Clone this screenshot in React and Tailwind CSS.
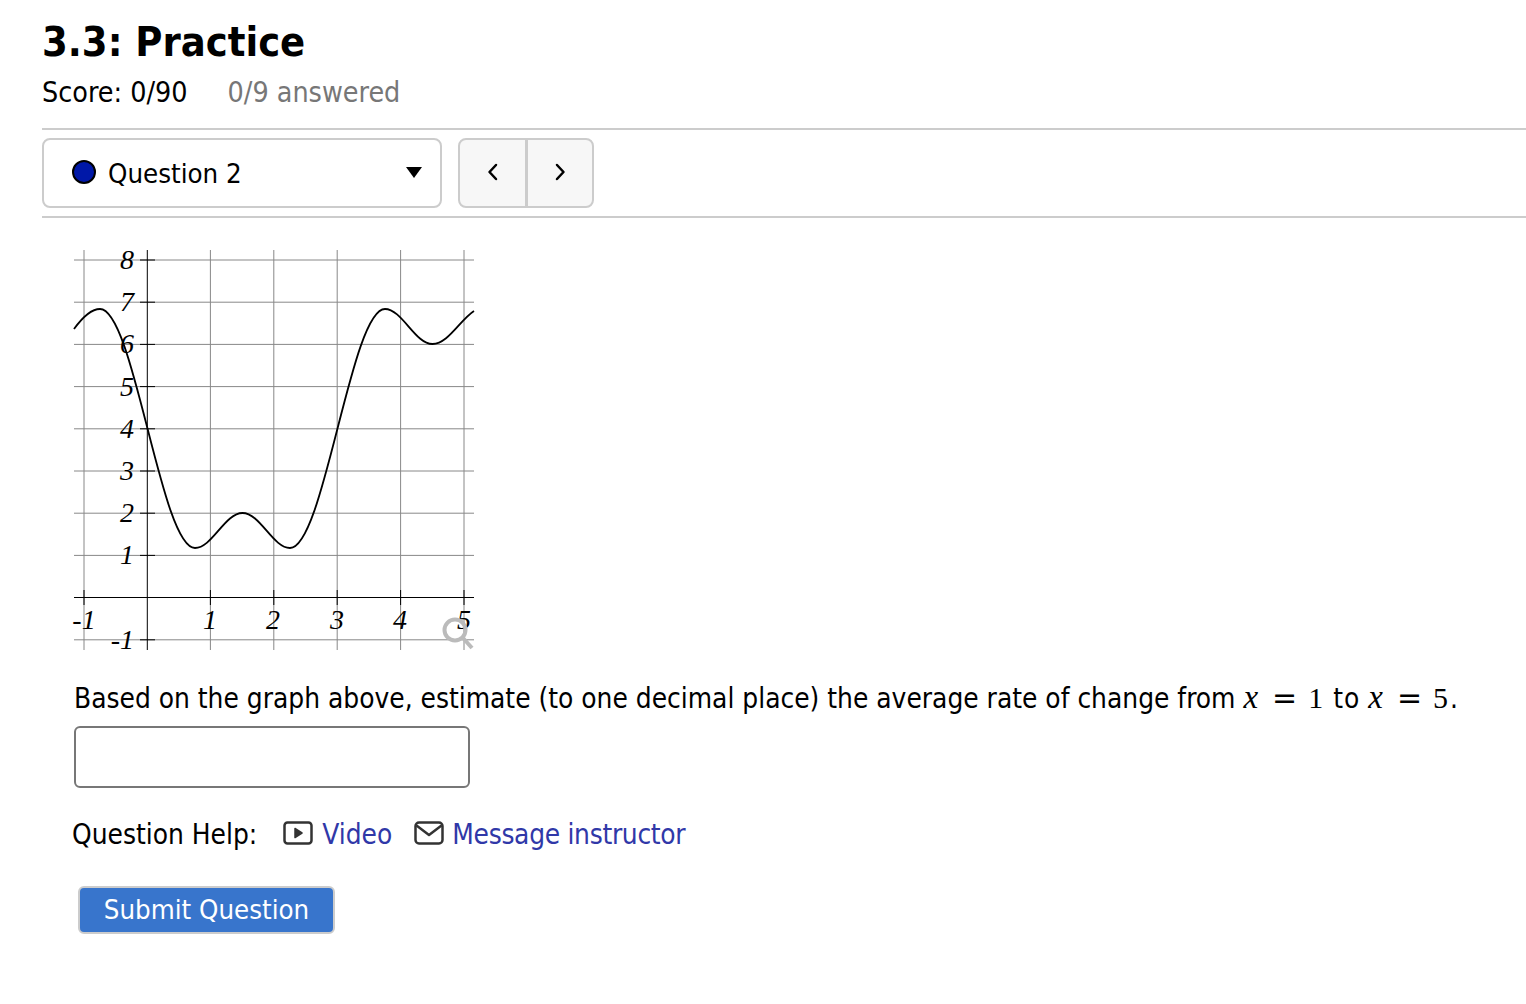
const xTicks = [
  { x: 84, label: '-1', lx: 84 },
  { x: 210.4, label: '1', lx: 210 },
  { x: 273.8, label: '2', lx: 273 },
  { x: 337.2, label: '3', lx: 337 },
  { x: 400.6, label: '4', lx: 400 },
  { x: 464, label: '5', lx: 464 },
];

const yTicks = [
  { y: 260, label: '8' },
  { y: 302.2, label: '7' },
  { y: 344.4, label: '6' },
  { y: 386.6, label: '5' },
  { y: 428.8, label: '4' },
  { y: 471, label: '3' },
  { y: 513.2, label: '2' },
  { y: 555.4, label: '1' },
  { y: 639.8, label: '-1' },
];

const curve =
  'M0 79 C8 68 17 59 26 59 C60 59 87 298 121 298 C138 298 151 263 168.500 263 C186 263 199 298 216 298 C250 298 277 59 311 59 C328 59 341 94 358.500 94 C374 94 386 70 400 61';

const Graph = () => (
  <svg width="400" height="400" viewBox="0 0 400 400" className="block overflow-visible">
    {xTicks.map((t) => (
      <line key={t.x} x1={t.x - 74} x2={t.x - 74} y1="0" y2="400" stroke="#888" strokeWidth="1" />
    ))}
    {yTicks.map((t) => (
      <line key={t.y} x1="0" x2="400" y1={t.y - 250} y2={t.y - 250} stroke="#888" strokeWidth="1" />
    ))}
    <line x1="73.300" x2="73.300" y1="0" y2="400" stroke="#000" />
    <line x1="0" x2="400" y1="347.500" y2="347.500" stroke="#000" />
    {yTicks.map((t) => (
      <line key={t.y} x1="66" x2="81" y1={t.y - 250} y2={t.y - 250} stroke="#000" />
    ))}
    <line x1="66" x2="81" y1="347.500" y2="347.500" stroke="#000" />
    {xTicks.map((t) => (
      <line key={t.x} x1={t.x - 74} x2={t.x - 74} y1="340" y2="355" stroke="#000" />
    ))}
    <g fontFamily="'Liberation Serif', serif" fontStyle="italic" fontSize="28" fill="#000">
      {yTicks.map((t) => (
        <text key={t.y} x="60" y={t.y - 250 + 9} textAnchor="end">
          {t.label}
        </text>
      ))}
      {xTicks.map((t) => (
        <text key={t.x} x={t.lx - 74} y="379" textAnchor="middle">
          {t.label}
        </text>
      ))}
    </g>
    <path d={curve} fill="none" stroke="#000" strokeWidth="1.800" />
    <circle cx="381" cy="380" r="10.500" fill="none" stroke="#bbb" strokeWidth="4" />
    <line x1="389" x2="398" y1="388" y2="398" stroke="#bbb" strokeWidth="4" />
  </svg>
);

const Chevron = ({ d }) => (
  <svg className="mb-[2px]" width="16" height="20" viewBox="0 0 16 20" fill="none" stroke="#000" strokeWidth="2.500" strokeLinecap="round" strokeLinejoin="round">
    <path d={d} />
  </svg>
);

const Equation = ({ value }) => (
  <span className="font-['Liberation_Serif',serif] text-[30px]">
    <i className="text-[33px]">x</i>
    <span className="mr-[11px] ml-[14px] font-['DejaVu_Sans',sans-serif] text-[30px]">=</span>
    {value}
  </span>
);

export default function App() {
  return (
    <div className="min-h-screen bg-white pl-[42px] font-['DejaVu_Sans_Condensed','DejaVu_Sans',sans-serif] text-black">
      <h1 className="pt-[16px] text-[41.200px] leading-[52px] font-bold">3.3: Practice</h1>
      <div className="mt-[4px] flex h-[42px] items-center text-[28.400px]">
        <span>Score: 0/90</span>
        <span className="ml-[40px] text-[#777]">0/9 answered</span>
      </div>
      <hr className="mt-[14px] border-0 border-t-2 border-[#ccc]" />
      <div className="mt-[8px] flex gap-4">
        <div className="flex h-[70px] w-[400px] items-center rounded-lg border-2 border-[#ccc] pr-[18px] pl-[28px]">
          <span className="mb-[2px] h-6 w-6 rounded-full border-2 border-black bg-[#0018a8]" />
          <span className="mt-[2px] ml-[12px] text-[27.400px]">Question 2</span>
          <span className="mb-[2px] ml-auto h-0 w-0 border-x-[8px] border-t-[11px] border-x-transparent border-t-black" />
        </div>
        <div className="flex h-[70px] w-[136px] rounded-lg border-2 border-[#ccc] bg-[#f7f7f7]">
          <button className="flex w-[68px] items-center justify-center border-r-[3px] border-[#ccc]">
            <Chevron d="M11 3 L4.500 10 L11 17" />
          </button>
          <button className="flex flex-1 items-center justify-center">
            <Chevron d="M5 3 L11.500 10 L5 17" />
          </button>
        </div>
      </div>
      <hr className="mt-[8px] border-0 border-t-2 border-[#ccc]" />

      <div className="pl-[32px]">
        <div className="mt-[32px]">
          <Graph />
        </div>
        <p className="mt-[27px] h-[40px] text-[27.800px] leading-[40px] whitespace-nowrap">
          Based on the graph above, estimate (to one decimal place) the average rate of change from <Equation value="1" /> <span className="ml-[2px] tracking-[1px]">to</span> <Equation value="5" /><span className="ml-[2px]">.</span>
        </p>
        <input className="mt-[9px] block h-[62px] w-[396px] rounded-md border-2 border-[#777] bg-white" />
        <div className="mt-[26px] -ml-[2px] flex h-[42px] items-center text-[27.800px]">
          <span>Question Help:</span>
          <svg className="mb-[4px] ml-[26px]" width="30" height="24" viewBox="0 0 30 24" fill="none">
            <rect x="1.500" y="1.500" width="27" height="21" rx="3" stroke="#333" strokeWidth="2.500" />
            <path d="M12 7.500 L19 12 L12 16.500 Z" fill="#333" stroke="#333" strokeWidth="1.500" strokeLinejoin="round" />
          </svg>
          <a className="ml-[9px] text-[#3038a8]">Video</a>
          <svg className="mb-[4px] ml-[22px]" width="30" height="24" viewBox="0 0 30 24" fill="none">
            <rect x="1.500" y="1.500" width="27" height="21" rx="3.500" stroke="#333" strokeWidth="2.500" />
            <path d="M2.500 4.500 L15 14 L27.500 4.500" stroke="#333" strokeWidth="2.500" strokeLinejoin="round" />
          </svg>
          <a className="ml-[8px] tracking-[-0.3px] text-[#3038a8]">Message instructor</a>
        </div>
        <button className="mt-[30px] ml-[4px] block h-[48px] w-[257px] rounded-md border-2 border-[#ccc] bg-[#3875cc] text-[27.400px] text-white">
          Submit Question
        </button>
      </div>
    </div>
  );
}
